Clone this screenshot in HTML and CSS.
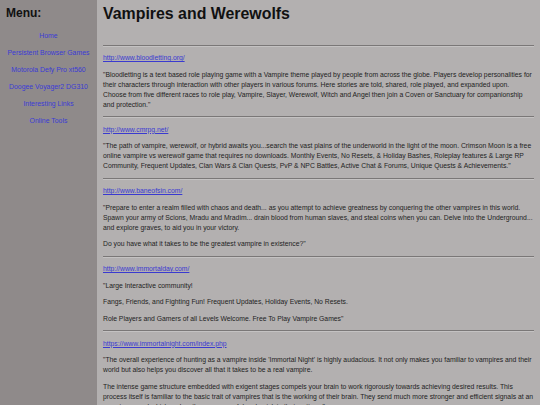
FILE: index.html
```html
<!DOCTYPE html>
<html>
<head>
<meta charset="utf-8">
<title>Vampires and Werewolfs</title>
<link rel="stylesheet" href="styles.css">
</head>
<body>
<div class="page">
  <nav class="sidebar">
    <div class="menu-title">Menu:</div>
    <ul class="menu">
      <li><a href="#">Home</a></li>
      <li><a href="#">Persistent Browser Games</a></li>
      <li><a href="#">Motorola Defy Pro xt560</a></li>
      <li><a href="#">Doogee Voyager2 DG310</a></li>
      <li><a href="#">Interesting Links</a></li>
      <li><a href="#">Online Tools</a></li>
    </ul>
  </nav>
  <main class="content">
    <h1 class="title">Vampires and Werewolfs</h1>
    <div class="spacer"></div>
    <hr>
    <p><a href="#">http://www.bloodletting.org/</a></p>
    <p>"Bloodletting is a text based role playing game with a Vampire theme played by people from across the globe. Players develop personalities for their characters through interaction with other players in various forums. Here stories are told, shared, role played, and expanded upon. Choose from five different races to role play, Vampire, Slayer, Werewolf, Witch and Angel then join a Coven or Sanctuary for companionship and protection."</p>
    <hr>
    <p><a href="#">http://www.cmrpg.net/</a></p>
    <p>"The path of vampire, werewolf, or hybrid awaits you...search the vast plains of the underworld in the light of the moon. Crimson Moon is a free online vampire vs werewolf game that requires no downloads. Monthly Events, No Resets, &amp; Holiday Bashes, Roleplay features &amp; Large RP Community, Frequent Updates, Clan Wars &amp; Clan Quests, PvP &amp; NPC Battles, Active Chat &amp; Forums, Unique Quests &amp; Achievements."</p>
    <hr>
    <p><a href="#">http://www.baneofsin.com/</a></p>
    <p>"Prepare to enter a realm filled with chaos and death... as you attempt to achieve greatness by conquering the other vampires in this world. Spawn your army of Scions, Mradu and Mradim... drain blood from human slaves, and steal coins when you can. Delve into the Underground... and explore graves, to aid you in your victory.</p>
    <p>Do you have what it takes to be the greatest vampire in existence?"</p>
    <hr>
    <p><a href="#">http://www.immortalday.com/</a></p>
    <p>"Large Interactive community!</p>
    <p>Fangs, Friends, and Fighting Fun! Frequent Updates, Holiday Events, No Resets.</p>
    <p>Role Players and Gamers of all Levels Welcome. Free To Play Vampire Games"</p>
    <hr>
    <p><a href="#">https://www.immortalnight.com/index.php</a></p>
    <p>"The overall experience of hunting as a vampire inside 'Immortal Night' is highly audacious. It not only makes you familiar to vampires and their world but also helps you discover all that it takes to be a real vampire.</p>
    <p>The intense game structure embedded with exigent stages compels your brain to work rigorously towards achieving desired results. This process itself is familiar to the basic trait of vampires that is the working of their brain. They send much more stronger and efficient signals at an amazing speed which makes them so powerful and quick in their actions."</p>
  </main>
</div>
</body>
</html>
```
FILE: styles.css
```css
html, body {
  margin: 0;
  padding: 0;
  background: #b3b0b0;
  font-family: "Liberation Sans", Arial, sans-serif;
  color: #1e1e1e;
}
.page {
  display: flex;
  align-items: stretch;
  min-height: 405px;
}
.sidebar {
  width: 97px;
  flex: 0 0 97px;
  background: #8f8a8a;
  padding-top: 6px;
}
.menu-title {
  font-weight: bold;
  font-size: 12px;
  line-height: 14px;
  padding-left: 6px;
  color: #111;
}
.menu {
  list-style: none;
  margin: 11px 0 0 0;
  padding: 0;
  text-align: center;
}
.menu li {
  font-size: 6.9px;
  line-height: 10px;
  margin-bottom: 7px;
}
.menu a {
  color: #3b3bd6;
  text-decoration: none;
}
.content {
  flex: 1;
  padding: 0 6px 0 6px;
  font-size: 6.8px;
  line-height: 10px;
}
.title {
  font-size: 15.9px;
  line-height: 20px;
  margin: 4px 0 0 0;
  color: #111;
}
.spacer {
  height: 14px;
}
hr {
  border: 0;
  border-top: 1px solid #7a7777;
  border-bottom: 1px solid #c4c2c2;
  margin: 6.5px 0;
}
p {
  margin: 6.5px 0;
}
.content a {
  color: #3a3ad0;
}
```
